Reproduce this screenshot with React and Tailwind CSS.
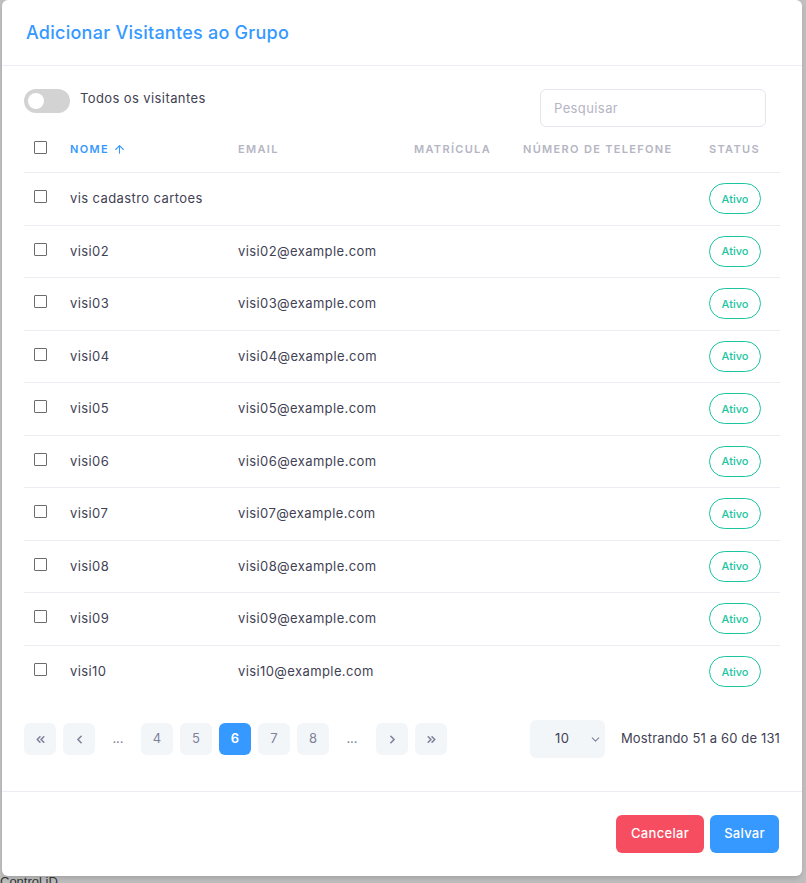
import React from "react";
import { ArrowUp, ChevronDown, ChevronLeft, ChevronRight, ChevronsLeft, ChevronsRight } from "lucide-react";

const ROWS = [
  { nome: "vis cadastro cartoes", email: "" },
  { nome: "visi02", email: "visi02@example.com" },
  { nome: "visi03", email: "visi03@example.com" },
  { nome: "visi04", email: "visi04@example.com" },
  { nome: "visi05", email: "visi05@example.com" },
  { nome: "visi06", email: "visi06@example.com" },
  { nome: "visi07", email: "visi07@example.com" },
  { nome: "visi08", email: "visi08@example.com" },
  { nome: "visi09", email: "visi09@example.com" },
  { nome: "visi10", email: "visi10@example.com" }
];

const cols = "grid grid-cols-[46px_168px_176px_109px_186px_70px]";
const th = "text-[11px] font-semibold uppercase tracking-[0.12em] text-[#b5b5c3]";
const pageBtn = "w-8 h-8 rounded-md bg-[#f3f6f9] text-[#7e8299] flex items-center justify-center text-[13px]";

function Checkbox() {
  return <span className="block w-[13px] h-[13px] border border-[#6c6c6c] rounded-[1px] bg-white" />;
}

export default function App() {
  return (
    <div className="min-h-[883px] bg-[#bfbfbf] relative overflow-hidden" style={{ fontFamily: "Inter, 'Noto Sans', sans-serif" }}>
      <div className="ml-[2px] w-[800px] h-[876px] bg-white rounded-md shadow-md flex flex-col">
        <div className="h-[66px] border-b border-[#ebedf3] px-6 flex items-center">
          <h1 className="text-[18px] font-medium text-[#3699ff] tracking-[0.25px]">Adicionar Visitantes ao Grupo</h1>
        </div>

        <div className="px-[22px] pt-[23px] flex-1 tracking-[0.4px]">
          <div className="flex justify-between">
            <div className="flex items-start gap-[10px]">
              <span className="w-[46px] h-6 rounded-full bg-[#d3d3d3] relative">
                <span className="absolute left-[4px] top-[4px] w-4 h-4 rounded-full bg-white" />
              </span>
              <span className="text-[13px] text-[#3f4254] leading-[18px]">Todos os visitantes</span>
            </div>
            <div className="w-[226px] h-[38px] mr-[14px] border border-[#e4e6ef] rounded-md flex items-center px-[13px] pt-[1px] text-[13px] text-[#b5b5c3]">
              Pesquisar
            </div>
          </div>

          <div className={`${cols} h-[46px] items-center border-b border-[#ebedf3]`}>
            <div className="pl-[10px] -mt-[4px]"><Checkbox /></div>
            <div className={`${th} !text-[#3699ff] flex items-center gap-1`}>
              Nome <ArrowUp size={13} strokeWidth={2} />
            </div>
            <div className={th}>Email</div>
            <div className={th}>Matrícula</div>
            <div className={th}>Número de telefone</div>
            <div className={th}>Status</div>
          </div>

          {ROWS.map((r, i) => (
            <div key={r.nome} className={`${cols} h-[52.5px] items-center text-[13px] text-[#3f4254] ${i < ROWS.length - 1 ? "border-b border-[#ebedf3]" : ""}`}>
              <div className="pl-[10px] -mt-[4px]"><Checkbox /></div>
              <div>{r.nome}</div>
              <div>{r.email}</div>
              <div />
              <div />
              <div>
                <span className="w-[52px] h-[31px] rounded-full border border-[#1bc5a0] text-[#1bc5a0] text-[11px] font-medium tracking-normal flex items-center justify-center">Ativo</span>
              </div>
            </div>
          ))}

          <div className="flex items-center justify-between mt-[22px]">
            <div className="flex items-center gap-[7px] tracking-normal">
              <span className={pageBtn}><ChevronsLeft size={13} strokeWidth={3} /></span>
              <span className={pageBtn}><ChevronLeft size={13} strokeWidth={3} /></span>
              <span className="w-8 h-8 flex items-center justify-center text-[13px] text-[#7e8299]">...</span>
              <span className={pageBtn}>4</span>
              <span className={pageBtn}>5</span>
              <span className="w-8 h-8 rounded-md bg-[#3699ff] text-white flex items-center justify-center text-[13px] font-semibold">6</span>
              <span className={pageBtn}>7</span>
              <span className={pageBtn}>8</span>
              <span className="w-8 h-8 flex items-center justify-center text-[13px] text-[#7e8299]">...</span>
              <span className={`${pageBtn} ml-[1px]`}><ChevronRight size={13} strokeWidth={3} /></span>
              <span className={pageBtn}><ChevronsRight size={13} strokeWidth={3} /></span>
            </div>
            <div className="flex items-center gap-4">
              <div className="w-[75px] h-[38px] rounded-md bg-[#f3f6f9] flex items-center justify-between pl-[25px] pr-[3px] text-[13px] text-[#3f4254]">
                10 <ChevronDown size={13} className="text-[#7e8299]" />
              </div>
              <span className="text-[13px] text-[#3f4254] tracking-[0.15px]">Mostrando 51 a 60 de 131</span>
            </div>
          </div>
        </div>

        <div className="border-t border-[#ebedf3] h-[85px] px-[23px] flex items-center justify-end gap-[6px] tracking-[0.3px]">
          <button className="w-[88px] h-[38px] rounded-md bg-[#f64e60] text-white text-[13px] font-medium">Cancelar</button>
          <button className="w-[69px] h-[38px] rounded-md bg-[#3699ff] text-white text-[13px] font-medium">Salvar</button>
        </div>
      </div>
      <div className="absolute left-0 top-[872px] text-[13px] text-[#333]" style={{ fontFamily: "'Liberation Sans', sans-serif" }}>Control iD</div>
    </div>
  );
}
